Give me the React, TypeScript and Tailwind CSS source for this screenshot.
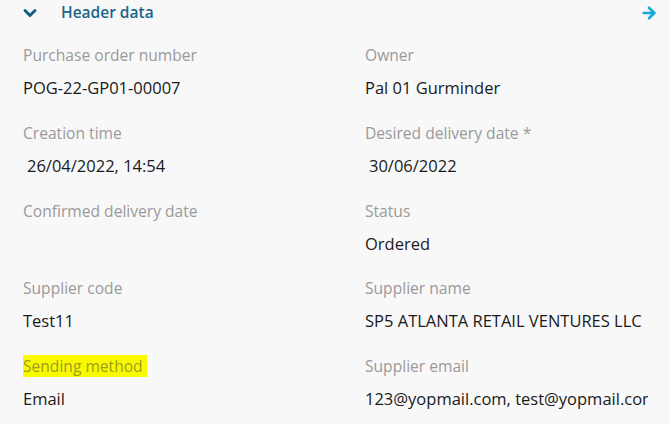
import { ChevronDown, ArrowRight } from 'lucide-react'

type Field = { label: string; value: string; indent?: boolean; highlight?: boolean }

const fields: Field[] = [
  { label: 'Purchase order number', value: 'POG-22-GP01-00007' },
  { label: 'Owner', value: 'Pal 01 Gurminder' },
  { label: 'Creation time', value: '26/04/2022, 14:54', indent: true },
  { label: 'Desired delivery date *', value: '30/06/2022', indent: true },
  { label: 'Confirmed delivery date', value: '' },
  { label: 'Status', value: 'Ordered' },
  { label: 'Supplier code', value: 'Test11' },
  { label: 'Supplier name', value: 'SP5 ATLANTA RETAIL VENTURES LLC' },
  { label: 'Sending method', value: 'Email', highlight: true },
  { label: 'Supplier email', value: '123@yopmail.com, test@yopmail.com' },
]

export default function App() {
  return (
    <div
      className="h-[424px] w-[670px] overflow-hidden bg-[#f8f8f8]"
      style={{ fontFamily: '"Open Sans", "Noto Sans", sans-serif' }}
    >
      <header className="flex h-[26px] items-center pl-[20px] pr-[12px]">
        <ChevronDown className="h-5 w-5 text-[#0f5f80]" strokeWidth={3.5} />
        <span className="ml-[21px] text-[15.5px] font-semibold text-[#1a6688]">Header data</span>
        <ArrowRight className="ml-auto h-[18px] w-[18px] text-[#1aa9d6]" strokeWidth={3.5} />
      </header>

      <div className="grid grid-cols-[342px_283px] gap-y-[21.75px] pl-[23px] pt-[18px]">
        {fields.map((f) => (
          <div key={f.label} className="flex min-w-0 flex-col gap-[10px] overflow-hidden">
            <div className="h-[22px] leading-[22px]">
              {f.highlight ? (
                <span className="-ml-[3px] inline-block h-[22px] bg-[#f9f900] pl-[3px] pr-[4px] text-[15.6px] leading-[22px] text-[#9d9d20]">
                  {f.label}
                </span>
              ) : (
                <span className="text-[15.6px] text-[#9a9a9a]">{f.label}</span>
              )}
            </div>
            <div
              className={`h-[24px] whitespace-nowrap text-[16.5px] leading-[24px] text-[#1a1a1a] ${f.indent ? 'pl-1' : ''}`}
            >
              {f.value}
            </div>
          </div>
        ))}
      </div>
    </div>
  )
}
